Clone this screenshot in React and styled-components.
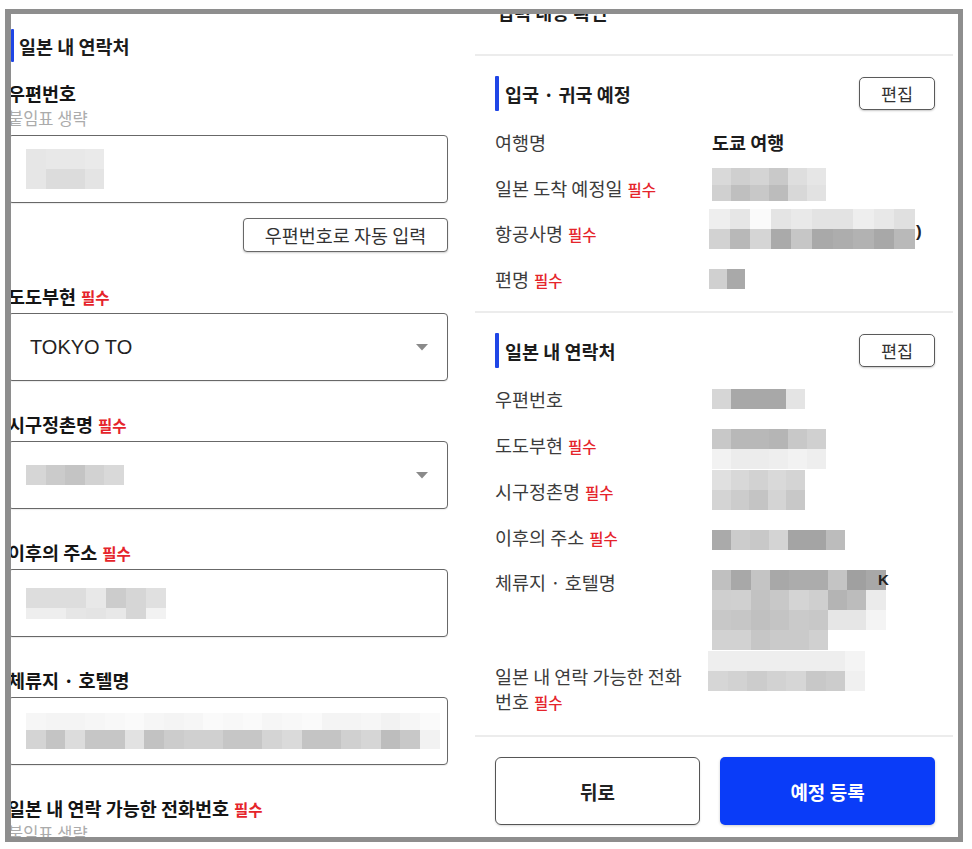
import React from "react";
import styled, { createGlobalStyle } from "styled-components";

const GlobalStyle = createGlobalStyle`
  html, body { margin: 0; padding: 0; background: #fff; }
  body { font-family: "Noto Sans CJK KR", "Noto Sans", sans-serif; color: #222; }
  * { box-sizing: border-box; }
`;

const Stage = styled.div`
  width: 972px;
  height: 849px;
  padding: 9px 0 0 5px;
  background: #fff;
`;

const Frame = styled.div`
  width: 958px;
  height: 833px;
  border: 5px solid #8e8e8e;
  border-left-width: 6px;
  overflow: hidden;
  display: grid;
  grid-template-columns: 459px 1fr;
  background: #fff;
`;

/* ---------- left: form ---------- */
const LeftCol = styled.div`
  margin-left: -3px;
  padding-top: 15px;
  display: flex;
  flex-direction: column;
`;

const FormStack = styled.div`
  width: 440px;
  display: flex;
  flex-direction: column;
`;

const TitleRow = styled.div`
  display: flex;
  align-items: center;
  height: 33px;
`;

const AccentBar = styled.span`
  display: block;
  flex: none;
  width: ${(p) => p.$w || 3}px;
  height: ${(p) => p.$h || 33}px;
  margin-left: ${(p) => p.$ml || 0}px;
  background: #1f46e6;
  border-radius: 1px;
`;

const TitleText = styled.h2`
  margin: 0 0 0 ${(p) => p.$gap || 5}px;
  font-size: 18.5px;
  line-height: 24px;
  font-weight: 700;
  color: #1c1c1c;
  white-space: nowrap;
`;

const FieldLabel = styled.div`
  margin-top: ${(p) => p.$gap}px;
  height: 24px;
  font-size: 18.5px;
  line-height: 24px;
  font-weight: 700;
  color: #151515;
  white-space: nowrap;
`;

const Required = styled.span`
  margin-left: 5px;
  font-size: 15.5px;
  line-height: 1;
  font-weight: ${(p) => (p.$light ? 500 : 700)};
  color: #e5242b;
`;

const Hint = styled.div`
  margin-top: 3px;
  font-size: 16.5px;
  line-height: 20px;
  color: #ababab;
  white-space: nowrap;
`;

const Box = styled.div`
  margin-top: ${(p) => p.$gap}px;
  height: 68px;
  border: 1.5px solid #686868;
  border-radius: 4px;
  display: flex;
  align-items: center;
  justify-content: space-between;
  padding: 0 19px 0 17px;
  box-shadow: 0 1px 1px rgba(0, 0, 0, 0.08);
  background: #fff;
`;

const SelectValue = styled.span`
  margin-left: 4px;
  font-family: "Liberation Sans", Arial, sans-serif;
  font-size: 20px;
  color: #222;
`;

const GhostButton = styled.button`
  align-self: flex-end;
  margin-top: 15px;
  width: 205px;
  height: 34px;
  border: 1.5px solid #686868;
  border-radius: 4px;
  background: #fff;
  box-shadow: 0 1px 2px rgba(0, 0, 0, 0.2);
  font-family: inherit;
  font-size: 18.5px;
  line-height: 1;
  color: #333;
  padding: 0;
`;

/* ---------- right: confirmation ---------- */
const RightCol = styled.div`
  padding: 0 23px 0 25px;
  display: flex;
  flex-direction: column;
`;

const PageHeading = styled.h1`
  margin: -14px 0 0 2px;
  height: 24px;
  font-size: 18.5px;
  line-height: 24px;
  font-weight: 700;
  color: #1c1c1c;
`;

const Divider = styled.hr`
  margin: ${(p) => p.$mt}px -18px 0 -20px;
  height: 2px;
  border: none;
  background: #ececec;
  flex: none;
`;

const Section = styled.section`
  padding-top: 20px;
  display: flex;
  flex-direction: column;
`;

const SectionHead = styled.div`
  height: 35px;
  display: flex;
  align-items: center;
  justify-content: space-between;
  margin-bottom: 9px;
`;

const HeadLeft = styled.div`
  display: flex;
  align-items: center;
  height: 100%;
`;

const EditButton = styled.button`
  width: 76px;
  height: 33px;
  border: 1.5px solid #5a5a5a;
  border-radius: 5px;
  background: #fff;
  box-shadow: 0 1px 2px rgba(0, 0, 0, 0.22);
  font-family: inherit;
  font-size: 17.5px;
  line-height: 1;
  color: #333;
  padding: 0;
`;

const Row = styled.div`
  display: grid;
  grid-template-columns: 217px 1fr;
  align-items: start;
`;

const RowLabel = styled.div`
  padding: ${(p) => p.$pt || 11}px 30px 11px 0;
  font-size: 18.5px;
  line-height: ${(p) => p.$lh || 23.5}px;
  color: #3c3c3c;
`;

const RowValue = styled.div`
  display: flex;
  align-items: flex-start;
  margin-top: ${(p) => p.$mt || 0}px;
  margin-left: ${(p) => p.$ml || 0}px;
`;

const BoldValue = styled.span`
  font-size: 18.5px;
  line-height: 23.5px;
  font-weight: 700;
  color: #1c1c1c;
`;

const Tail = styled.span`
  margin-top: ${(p) => p.$mt || 0}px;
  margin-left: ${(p) => p.$ml || 1}px;
  font-family: "Liberation Sans", Arial, sans-serif;
  font-size: ${(p) => p.$fs || 17}px;
  line-height: 20px;
  font-weight: 700;
  color: #222;
`;

const Footer = styled.div`
  padding-top: 20px;
  display: grid;
  grid-template-columns: 205px 1fr;
  gap: 20px;
`;

const BackButton = styled.button`
  height: 68px;
  border: 1.5px solid #555;
  border-radius: 6px;
  background: #fff;
  box-shadow: 0 1px 2px rgba(0, 0, 0, 0.15);
  font-family: inherit;
  font-size: 19px;
  font-weight: 700;
  color: #222;
`;

const PrimaryButton = styled.button`
  height: 68px;
  border: none;
  border-radius: 5px;
  background: #0a3cf8;
  box-shadow: 0 1px 3px rgba(0, 0, 0, 0.2);
  font-family: inherit;
  font-size: 19px;
  font-weight: 700;
  color: #fff;
`;

const MosaicSvg = styled.svg`
  display: block;
  flex: none;
`;

/* ---------- drawings ---------- */
const g = (v) => `#${v}${v}${v}`;

function Mosaic({ rows, cw, ch }) {
  const parsed = rows.map((r) => r.split(" "));
  const heights = parsed.map((_, i) => (Array.isArray(ch) ? ch[i] : ch));
  const cols = Math.max(...parsed.map((r) => r.length));
  const width = Math.round(cols * cw);
  const height = heights.reduce((a, b) => a + b, 0);
  let y = 0;
  const rects = [];
  parsed.forEach((r, i) => {
    r.forEach((c, j) => {
      if (c !== "ff") {
        rects.push(
          <rect key={`${i}-${j}`} x={j * cw} y={y} width={cw + 0.4} height={heights[i] + 0.4} fill={g(c)} />
        );
      }
    });
    y += heights[i];
  });
  return (
    <MosaicSvg width={width} height={height} viewBox={`0 0 ${width} ${height}`} shapeRendering="crispEdges">
      {rects}
    </MosaicSvg>
  );
}

const Caret = () => (
  <svg width="12" height="7" viewBox="0 0 12 7">
    <polygon points="0,0 12,0 6,6.5" fill="#8a8a8a" />
  </svg>
);

/* ---------- data ---------- */
const tripRows = [
  { label: "여행명", value: <BoldValue>도쿄 여행</BoldValue>, mt: 11 },
  {
    label: "일본 도착 예정일",
    req: true,
    mt: 2,
    value: <Mosaic cw={19} ch={16.5} rows={["d9 cf d4 c9 de e6", "d0 bf c8 bc d8 e2"]} />,
  },
  {
    label: "항공사명",
    req: true,
    mt: -2,
    ml: -3,
    value: (
      <>
        <Mosaic cw={20.6} ch={20} rows={["ee e6 fa e4 e9 e3 e3 ee e8 e0", "d2 b8 d5 aa c6 a9 ad b2 a8 b9"]} />
        <Tail $mt={13}>)</Tail>
      </>
    ),
  },
  { label: "편명", req: true, mt: 12, ml: -3, value: <Mosaic cw={18} ch={20} rows={["d0 a9"]} /> },
];

const contactRows = [
  { label: "우편번호", mt: 12, value: <Mosaic cw={18.6} ch={20} rows={["d6 a8 a8 a8 e4"]} /> },
  {
    label: "도도부현",
    req: true,
    mt: 6.5,
    value: <Mosaic cw={19} ch={20} rows={["c8 b8 b8 b5 c8 d0", "f2 ec ec ee f2 ee"]} />,
  },
  {
    label: "시구정촌명",
    req: true,
    mt: 1,
    value: <Mosaic cw={18.6} ch={20} rows={["e0 d8 d2 d9 d4", "d4 cc c4 d4 c8"]} />,
  },
  { label: "이후의 주소", req: true, mt: 15.5, value: <Mosaic cw={19} ch={20} rows={["aa cc c8 d4 a4 a4 bc"]} /> },
  {
    label: "체류지 · 호텔명",
    mt: 10,
    value: (
      <>
        <Mosaic
          cw={19.3}
          ch={20}
          rows={[
            "c0 a8 c4 a8 ac ac c4 a0 a8",
            "cf d0 c2 c8 d4 cf b4 bc eb",
            "c8 c6 c0 c4 ca c8 e6 e6 f4",
            "d2 d2 c6 ca ca d0 ff ff ff",
          ]}
        />
        <Tail $ml={-8} $fs={15} $mt={0}>K</Tail>
      </>
    ),
  },
  {
    label: "일본 내 연락 가능한 전화번호",
    req: true,
    pt: 14,
    lh: 25,
    mt: 1,
    ml: -4,
    value: <Mosaic cw={19.6} ch={20} rows={["ee ee ee ee ee ee ee f4", "d6 d2 cc d2 d6 c8 cc f0"]} />,
  },
];

function InfoRows({ rows }) {
  return rows.map((r) => (
    <Row key={r.label}>
      <RowLabel $pt={r.pt} $lh={r.lh}>
        {r.label}
        {r.req && <Required $light>필수</Required>}
      </RowLabel>
      <RowValue $mt={r.mt} $ml={r.ml}>
        {r.value}
      </RowValue>
    </Row>
  ));
}

function InfoSection({ title, rows }) {
  return (
    <Section>
      <SectionHead>
        <HeadLeft>
          <AccentBar $w={4} $h={35} />
          <TitleText $gap={6}>{title}</TitleText>
        </HeadLeft>
        <EditButton>편집</EditButton>
      </SectionHead>
      <InfoRows rows={rows} />
    </Section>
  );
}

export default function App() {
  return (
    <>
      <GlobalStyle />
      <Stage>
        <Frame>
          <LeftCol>
            <FormStack>
              <TitleRow>
                <AccentBar $ml={3} />
                <TitleText>일본 내 연락처</TitleText>
              </TitleRow>

              <FieldLabel $gap={19}>우편번호</FieldLabel>
              <Hint>붙임표 생략</Hint>
              <Box $gap={7}>
                <Mosaic cw={19.5} ch={20} rows={["e6 e8 e8 ea", "e6 dc dc e4"]} />
              </Box>
              <GhostButton>우편번호로 자동 입력</GhostButton>

              <FieldLabel $gap={32}>
                도도부현<Required>필수</Required>
              </FieldLabel>
              <Box $gap={5}>
                <SelectValue>TOKYO TO</SelectValue>
                <Caret />
              </Box>

              <FieldLabel $gap={31}>
                시구정촌명<Required>필수</Required>
              </FieldLabel>
              <Box $gap={5}>
                <Mosaic cw={19.6} ch={20} rows={["d6 cb c4 d2 d9"]} />
                <Caret />
              </Box>

              <FieldLabel $gap={31}>
                이후의 주소<Required>필수</Required>
              </FieldLabel>
              <Box $gap={5}>
                <Mosaic cw={20} ch={[20, 11]} rows={["dd dd dd e8 cc d6 e0", "ee ee e6 e4 e8 d6 f2"]} />
              </Box>

              <FieldLabel $gap={31}>체류지 · 호텔명</FieldLabel>
              <Box $gap={5}>
                <Mosaic
                  cw={19.7}
                  ch={[17, 19]}
                  rows={[
                    "f6 f4 f4 f6 f8 fa f6 f4 f6 fa f8 fa f6 f8 fa f4 f4 f6 f2 f6 fa",
                    "d4 c4 dc c6 c6 e2 c2 cc d0 d0 c6 c6 d4 da c4 c4 d0 d6 bd c8 f2",
                  ]}
                />
              </Box>

              <FieldLabel $gap={31}>
                일본 내 연락 가능한 전화번호<Required>필수</Required>
              </FieldLabel>
              <Hint>붙임표 생략</Hint>
            </FormStack>
          </LeftCol>

          <RightCol>
            <PageHeading>입력 내용 확인</PageHeading>
            <Divider $mt={30} />
            <InfoSection title="입국 · 귀국 예정" rows={tripRows} />
            <Divider $mt={9} />
            <InfoSection title="일본 내 연락처" rows={contactRows} />
            <Divider $mt={10} />
            <Footer>
              <BackButton>뒤로</BackButton>
              <PrimaryButton>예정 등록</PrimaryButton>
            </Footer>
          </RightCol>
        </Frame>
      </Stage>
    </>
  );
}
